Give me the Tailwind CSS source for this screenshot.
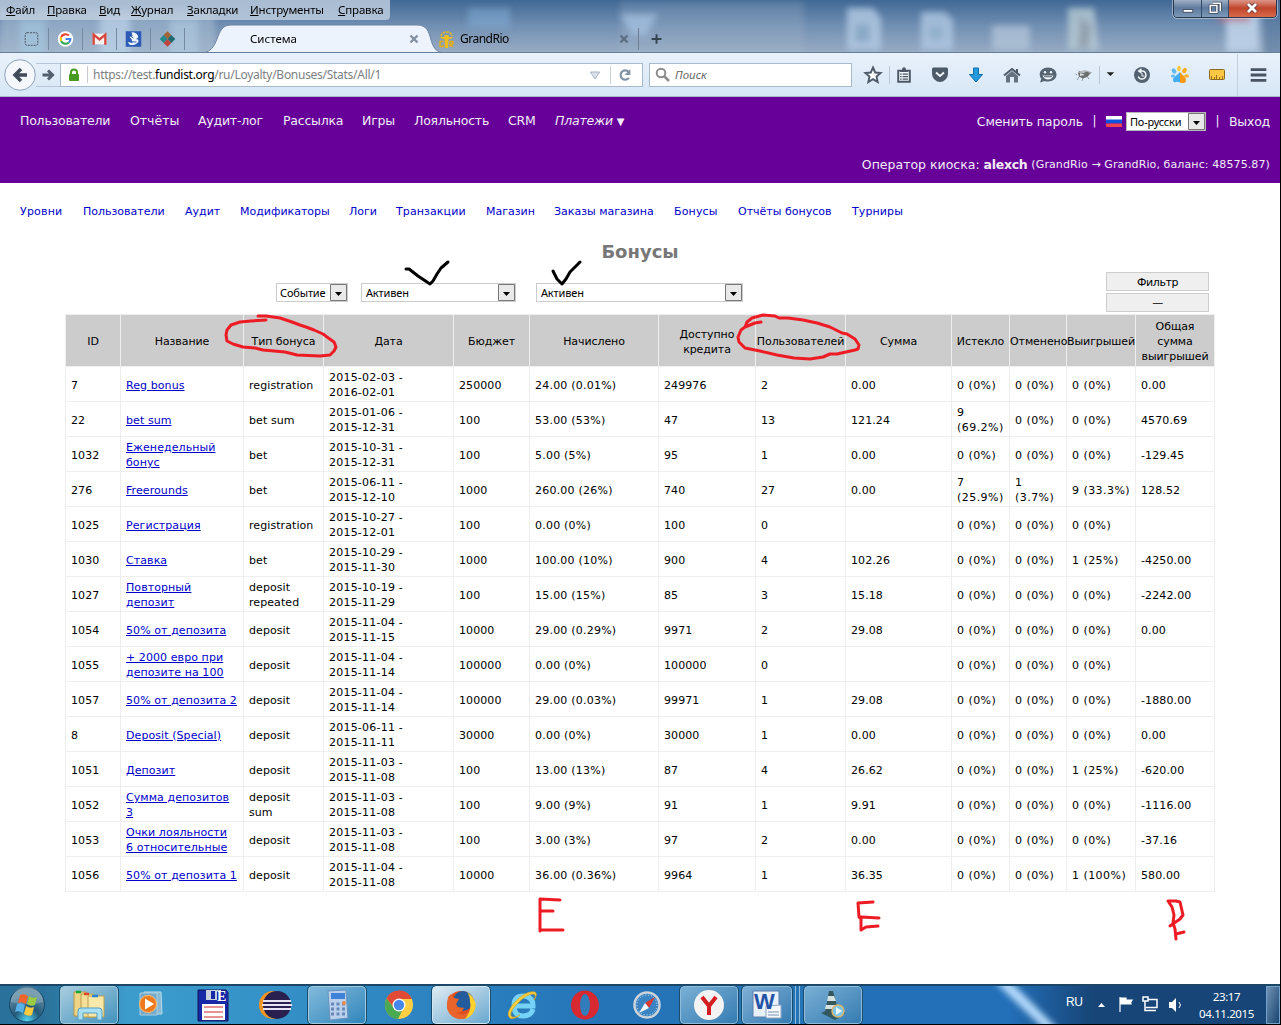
<!DOCTYPE html>
<html lang="ru">
<head>
<meta charset="utf-8">
<title>Система</title>
<script src="https://cdn.jsdelivr.net/npm/@tailwindcss/browser@4"></script>
</head>
<body class="relative flex h-[1025px] w-[1281px] flex-col overflow-hidden border-r border-b border-black bg-white font-['DejaVu_Sans',sans-serif] text-[11px] leading-[15px] text-black">

<!-- Window title bar, menu and tabs -->
<header class="relative h-[53px] shrink-0 overflow-hidden border-b border-[#63809f] bg-linear-to-b from-[#416995] via-[#7290b3] to-[#98abc3] font-['Noto_Sans',sans-serif] text-[12px] text-black">
  <svg class="absolute inset-0" width="1280" height="53">
    <defs><filter id="soft" x="-50%" y="-50%" width="200%" height="200%"><feGaussianBlur stdDeviation="3"/></filter></defs>
    <g filter="url(#soft)">
      <rect x="0" y="10" width="215" height="50" fill="#a9bdd2" opacity=".55"/>
      <rect x="100" y="16" width="30" height="40" fill="#c5dcf0" opacity=".6"/>
      <rect x="20" y="20" width="25" height="34" fill="#a8cfe9" opacity=".5"/>
      <rect x="170" y="20" width="28" height="34" fill="#b8d4ea" opacity=".5"/>
      <rect x="468" y="8" width="42" height="20" fill="#85b4dc" opacity=".45"/>
      <path d="M620 14h38l-12 22h-14z" fill="#a9c9ea" opacity=".7"/>
      <rect x="620" y="2" width="184" height="60" fill="#a4b6cc" opacity=".25"/>
      <path d="M847 8h26l8 10v32h-34z" fill="#b3cbe4" opacity=".8"/>
      <rect x="855" y="24" width="15" height="18" fill="#8ba9c8"/>
      <path d="M921 12h24l8 8v30h-32z" fill="#b3cbe4" opacity=".75"/>
      <circle cx="936" cy="33" r="8" fill="#93b1cc"/>
      <rect x="992" y="26" width="38" height="24" fill="#b3c6da" opacity=".75"/>
      <path d="M1068 8h26l5 42h-31z" fill="#b7cbd3" opacity=".8"/>
      <path d="M1080 16l12 10-4 22h-10z" fill="#94a2b0"/>
      <rect x="1226" y="14" width="33" height="38" fill="#bed1e8" opacity=".9"/>
      <rect x="1218" y="14" width="32" height="8" fill="#b86b7d" opacity=".7"/>
      <rect x="1264" y="0" width="20" height="60" fill="#4f7196" opacity=".5"/>
    </g>
  </svg>
  <nav class="relative flex h-5 w-[390px] items-center rounded-br bg-[#c3d1e1]/80 pb-[2px] pl-[6px] text-[11.5px] tracking-[-0.15px]">
    <span class="w-[41px]"><u>Ф</u>айл</span><span class="w-[52px]"><u>П</u>равка</span><span class="w-[32px]"><u>В</u>ид</span><span class="w-[56px]"><u>Ж</u>урнал</span><span class="w-[63px]"><u>З</u>акладки</span><span class="w-[88px]"><u>И</u>нструменты</span><span><u>С</u>правка</span>
  </nav>
  <svg class="absolute top-0 left-0" width="1280" height="53">
    <path d="M200 53C222 53 213 25 231 25H417C437 25 424 53 446 53Z" fill="#edf3fc" stroke="#6d86a2"/>
  </svg>
  <div class="relative flex h-8 items-center pt-[6px]">
    <div class="flex w-[215px] items-center pl-[15px]">
      <svg class="w-[34px] border-r border-[#75899f]" height="22" viewBox="0 0 34 22"><rect x="10.500" y="4.500" width="13" height="13" rx="2" fill="none" stroke="#49525e" stroke-dasharray="2 1"/></svg>
      <svg class="w-[34px] border-r border-[#75899f]" height="22" viewBox="0 0 34 22"><circle cx="17" cy="11" r="8" fill="#fff"/><g fill="none" stroke-width="2.200"><path d="M20.500 7.500A5 5 0 0 0 12.500 9" stroke="#ea4335"/><path d="M12.500 9a5 5 0 0 0 0 4" stroke="#fbbc05"/><path d="M12.500 13A5 5 0 0 0 20.500 14.500" stroke="#34a853"/><path d="M20.500 14.500Q22 13 22 11h-5" stroke="#4285f4"/></g></svg>
      <svg class="w-[34px] border-r border-[#75899f]" height="22" viewBox="0 0 34 22"><path d="M10 5.500h14v11H10z" fill="#f5f1f1"/><path d="M11 17V6.500l6 5 6-5V17" fill="none" stroke="#d7473d" stroke-width="2.400"/></svg>
      <svg class="w-[34px] border-r border-[#75899f]" height="22" viewBox="0 0 34 22"><path d="M9 3h16v16H9z" fill="#2c5bb5"/><path d="M15 4q6 0 7 5-1 2-3 2 4 0 3 3-3 4-9 3l-2-3 5 1-1-4-2-2 3-1z" fill="#eef5fc"/><path d="M14 8l3 2M15 14h5" stroke="#2b56ab"/></svg>
      <svg class="w-[34px] border-r border-[#75899f]" height="22" viewBox="0 0 34 22"><path d="M17 3l4 4-4 4-4-4z" fill="#a46536"/><path d="M13 7l4 4-4 4-4-4z" fill="#23888c"/><path d="M21 7l4 4-4 4-4-4z" fill="#1d6b70"/><path d="M17 11l4 4-4 4-4-4z" fill="#be4440"/></svg>
    </div>
    <div class="flex w-[220px] items-center pl-[35px] text-[11.5px]"><span class="w-[158px] pb-[2px]">Система</span><svg width="12" height="12" viewBox="0 0 12 12"><path d="M2.500 2.500l7 7m0-7l-7 7" stroke="#8390a3" stroke-width="2.400"/></svg></div>
    <div class="flex w-[204px] items-center pl-[4px]">
      <svg width="15" height="17" viewBox="0 0 15 17"><path d="M2 5q1-4 5.500-4T13 5" fill="none" stroke="#eab719" stroke-width="1.600" stroke-dasharray="2.500 1"/><path d="M0 6h5l1-2h3l1 2h5l-4 2H9.500l-.5 9H6l-.5-9H4z" fill="#f0bd1c"/><path d="M4.500 10.500H1v5h3v-2M11 16v-5.500h3V13h-3l3 3" fill="none" stroke="#e4ad13" stroke-width="1.300"/></svg>
      <span class="ml-[6px] w-[158px] pb-[2px] tracking-[-0.5px]">GrandRio</span><svg width="12" height="12" viewBox="0 0 12 12"><path d="M2.500 2.500l7 7m0-7l-7 7" stroke="#5d6e83" stroke-width="2.400"/></svg>
    </div>
    <svg class="ml-[-1px] border-l border-[#6e7f94]" width="38" height="22" viewBox="0 0 38 22"><path d="M18 6v10M13 11h10" stroke="#33444f" stroke-width="2"/></svg>
  </div>
  <div class="absolute top-[-2px] right-[3px] flex h-5 w-[104px] overflow-hidden rounded-b border border-[#26384d] outline outline-white/40">
    <svg class="w-7 border-r border-[#334c69] bg-linear-to-b from-[#a9b8ca] via-[#5e7a9c] to-[#7e9aba]" height="18" viewBox="0 0 28 18"><path d="M9.500 10.500h10v3h-10z" fill="#fff" stroke="#424d5e"/></svg>
    <svg class="w-[27px] border-r border-[#334c69] bg-linear-to-b from-[#a9b8ca] via-[#5e7a9c] to-[#7e9aba]" height="18" viewBox="0 0 27 18"><path d="M11 4h8v8M8.500 6.500h7v7h-7z" fill="none" stroke="#39475c" stroke-width="3"/><path d="M11 4h8v8M8.500 6.500h7v7h-7z" fill="none" stroke="#fff" stroke-width="1.500"/></svg>
    <svg class="flex-1 bg-linear-to-b from-[#dfa095] via-[#c0442b] to-[#d9694b]" height="18" viewBox="0 0 47 18"><path d="M19 5l8 8m0-8l-8 8" stroke="#65383a" stroke-width="4.500"/><path d="M19 5l8 8m0-8l-8 8" stroke="#fff" stroke-width="2.800"/></svg>
  </div>
</header>

<!-- Address toolbar -->
<div class="flex h-11 shrink-0 items-center border-b border-[#a8b9cc] bg-linear-to-b from-[#e9f1fb] to-[#d7e7f6] font-['Noto_Sans',sans-serif] text-[12px]">
  <svg class="ml-1" width="32" height="32" viewBox="0 0 32 32"><circle cx="16" cy="16" r="15.300" fill="#f4f8fd" stroke="#8fa2b8"/><path d="M23 16H11m6-6l-6 6 6 6" fill="none" stroke="#414b58" stroke-width="3.500"/></svg>
  <svg class="h-6 border-y border-[#b7c7d9]" width="24" height="24" viewBox="0 0 24 24"><path d="M6 12h11m-5-5l5 5-5 5" fill="none" stroke="#535f6d" stroke-width="3.200"/></svg>
  <div class="flex h-6 w-[583px] items-center border border-[#a8b9cb] bg-white">
    <svg width="26" height="20" viewBox="0 0 26 20"><rect x="8" y="9" width="10" height="7" rx="1" fill="#479b23"/><path d="M10 10V7.500q0-3 3-3t3 3V10" fill="none" stroke="#479b23" stroke-width="2"/></svg>
    <span class="flex h-[17px] w-[497px] items-center border-l border-[#c8cbd0] pl-[5px] text-[12px] tracking-[-0.28px] whitespace-pre text-[#7c7f83]">https://test.<span class="text-black">fundist.org</span>/ru/Loyalty/Bonuses/Stats/All/1</span>
    <svg width="26" height="18" viewBox="0 0 26 18"><path d="M6.500 6h9L11 13z" fill="#dce3ea" stroke="#a4b0bc"/></svg>
    <svg class="border-l border-[#c8cfd6]" width="31" height="18" viewBox="0 0 31 18"><path d="M18 5.500A4.800 4.800 0 1 0 18.500 12" fill="none" stroke="#8193a5" stroke-width="2.200"/><path d="M20 3v6h-6z" fill="#8193a5"/></svg>
  </div>
  <div class="ml-[6px] flex h-6 w-[203px] items-center border border-[#a8b9cb] bg-white">
    <svg width="25" height="20" viewBox="0 0 25 20"><circle cx="11" cy="8" r="4.300" fill="none" stroke="#8c8c8c" stroke-width="2"/><path d="M14 11l5 5" stroke="#8c8c8c" stroke-width="2.500"/></svg>
    <span class="text-[11.5px] text-[#686868] italic">Поиск</span>
  </div>
  <svg class="ml-[5px]" width="32" height="20" viewBox="0 0 32 20"><path d="M16 2.500l2.200 5 5.400.5-4.100 3.600 1.200 5.400-4.700-2.900-4.700 2.900 1.200-5.400L8.400 8l5.400-.5z" fill="#fff" stroke="#4d5967" stroke-width="1.900"/></svg>
  <svg class="border-l border-[#b8c7d6]" width="30" height="18" viewBox="0 0 30 18"><path d="M8.500 4.500h12v11.500h-12z" fill="#edf4fb" stroke="#4b5765" stroke-width="2"/><path d="M10.500 4h2q0-3 2-3t2 3h2v2h-8z" fill="#4b5765"/><path d="M10.500 8H12m1 0h5.500m-8 2.700H12m1 0h5.500m-8 2.600H12m1 0h5.500" stroke="#4b5765" stroke-width="1.300"/></svg>
  <svg class="ml-[3px]" width="36" height="20" viewBox="0 0 36 20"><path d="M10 4q0-1.500 1.500-1.500h13Q26 2.500 26 4v5q0 3-2.500 5.500T18 17q-3 0-5.500-2.500T10 9z" fill="#4d5a68"/><path d="M14 7.500l4 3.500 4-3.500" fill="none" stroke="#eef4fa" stroke-width="2"/></svg>
  <svg width="36" height="20" viewBox="0 0 36 20"><path d="M15.500 3h5v6.500h4L18 17l-6.500-7.500h4z" fill="#229bdd" stroke="#126ba6"/></svg>
  <svg width="36" height="20" viewBox="0 0 36 20"><path d="M10 10.500L18 4l8 6.500" fill="none" stroke="#4d5967" stroke-width="2"/><path d="M12 11l6-5 6 5v6.500h-4V12h-4v5.500h-4z" fill="#65717e"/><path d="M22 4h2v5l-2-1.500z" fill="#4d5967"/></svg>
  <svg width="36" height="20" viewBox="0 0 36 20"><path d="M18 2.500c5 0 8.500 3 8.500 7s-3.500 7-8.500 7q-2 0-3.500-.6L10 17.500l1.300-3.700Q9.700 12 9.700 9.500c0-4 3.500-7 8.300-7z" fill="#566371"/><circle cx="15" cy="7.300" r="1.200" fill="#eef4fa"/><circle cx="21" cy="7.300" r="1.200" fill="#eef4fa"/><path d="M12.500 10.500h11q-1.500 4-5.500 4t-5.500-4z" fill="#eef4fa"/><path d="M14 11.700h8" stroke="#566371"/></svg>
  <svg width="33" height="20" viewBox="0 0 33 20"><path d="M12 7l7-2 6 2-5 4-7 1z" fill="#b4b9bc"/><path d="M12 7.500l5 1 4-2 3.500 2-3.500 3.500-4 1.500-4-2z" fill="#6a6e6c"/><path d="M13 12l-2 3m6-2l-1 3m5-5l2 3m1-6l1.500-.5M11 10l-1.500-1m5-2l-2-1" stroke="#7c8481" stroke-width=".8"/><path d="M14 8l5 2-5 1z" fill="#d7dbd9"/></svg>
  <svg class="border-l border-[#b8c7d6]" width="19" height="18" viewBox="0 0 19 18"><path d="M7 6h8l-4 4z" fill="#222"/></svg>
  <svg class="ml-[6px]" width="36" height="20" viewBox="0 0 36 20"><circle cx="18" cy="10" r="8" fill="#536170"/><path d="M16.500 6H18a4 4 0 1 1-3.800 5.500" fill="none" stroke="#edf4f9" stroke-width="1.500"/><path d="M17.500 3v6L13.500 6z" fill="#edf4f9"/><path d="M18 8v3h2.500" fill="none" stroke="#edf4f9"/></svg>
  <svg class="ml-[2px]" width="36" height="20" viewBox="0 0 36 20"><path d="M18 7v10.500q-3-1.500-5.500 0-2.500-2-1-4.500z" fill="#41aef2"/><path d="M18 7v10.500q3 1 5 0 2-2 0-5z" fill="#f69814"/><ellipse cx="12" cy="6" rx="2" ry="2.800" transform="rotate(-35 12 6)" fill="#61b9f0"/><ellipse cx="17" cy="3.500" rx="1.800" ry="2.800" fill="#ffcb35"/><ellipse cx="22.500" cy="5.500" rx="2" ry="2.800" transform="rotate(35 22.500 5.500)" fill="#ffad19"/><ellipse cx="24.500" cy="11" rx="2.500" ry="1.800" fill="#ffb42b"/><ellipse cx="11" cy="11" rx="2" ry="1.500" fill="#61b9f0"/></svg>
  <svg class="ml-px" width="36" height="20" viewBox="0 0 36 20"><rect x="10.500" y="4.500" width="15" height="10" rx="1" fill="#fcc844" stroke="#8f681f"/><path d="M12.500 14v-3m3 3v-2m2 2v-4m3 4v-2m3 2v-3" stroke="#987227"/></svg>
  <svg class="ml-[2px] h-[42px] border-l border-[#c1d0df]" width="43" height="42" viewBox="0 0 43 42"><path d="M13 15.500h16M13 21h16m-16 5.500h16" stroke="#485462" stroke-width="3"/></svg>
</div>

<!-- Site header -->
<section class="h-[86px] shrink-0 bg-[#660099] text-[12.5px] text-[#f3ecf8]">
  <div class="flex h-[49px] items-center pl-5 tracking-[-0.22px]">
    <nav class="flex flex-1 pb-[2px] whitespace-nowrap"><a class="w-[110px]">Пользователи</a><a class="w-[68px] tracking-normal">Отчёты</a><a class="w-[85px]">Аудит-лог</a><a class="w-[79px]">Рассылка</a><a class="w-[52px]">Игры</a><a class="w-[94px]">Лояльность</a><a class="w-[47px]">CRM</a><a><i>Платежи</i> <span class="text-[10px]">▼</span></a></nav>
    <div class="flex items-center pr-[10px]">
      <a class="tracking-[-0.1px]">Сменить пароль</a><span class="w-[23px] text-center text-[12px]">|</span>
      <svg width="16" height="11" viewBox="0 0 16 11"><path d="M0 0h16v4H0z" fill="#fff"/><path d="M0 3.500h16v4H0z" fill="#0e52dd"/><path d="M0 7.500h16V11H0z" fill="#ef4352"/></svg>
      <span class="ml-1 flex h-[19px] w-20 items-center border border-[#b7b7b7] bg-white pl-[3px] font-['Noto_Sans',sans-serif] text-[11px] tracking-[-0.2px] text-black"><span class="w-[58px] whitespace-nowrap">По-русски</span><svg width="17" height="17" viewBox="0 0 17 17"><path d="M.5.500h16v16H.5z" fill="#e9e9e9" stroke="#777"/><path d="M5 8h7l-3.500 4z" fill="#000"/></svg></span>
      <span class="w-[23px] text-center text-[12px]">|</span><a>Выход</a>
    </div>
  </div>
  <div class="flex h-9 items-center justify-end pr-[10px] whitespace-pre"><span>Оператор киоска: <b class="tracking-[-0.3px]">alexch</b> </span><span class="pt-px text-[11px] tracking-[0.11px]">(GrandRio → GrandRio, баланс: 48575.87)</span></div>
</section>

<main class="relative h-[801px] shrink-0">
  <nav class="flex h-[56px] items-center pl-5 whitespace-nowrap text-[#0000cc]"><a class="w-[63px] tracking-[0.2px]">Уровни</a><a class="w-[102px]">Пользователи</a><a class="w-[55px]">Аудит</a><a class="w-[109px]">Модификаторы</a><a class="w-[47px]">Логи</a><a class="w-[90px] tracking-[0.1px]">Транзакции</a><a class="w-[68px]">Магазин</a><a class="w-[120px]">Заказы магазина</a><a class="w-[64px] tracking-[0.15px]">Бонусы</a><a class="w-[114px]">Отчёты бонусов</a><a class="tracking-[0.1px]">Турниры</a></nav>
  <h1 class="h-[33px] pt-px text-center text-[18px] leading-6 font-bold text-[#777]">Бонусы</h1>
  <div class="flex h-[42px] pl-[276px] font-['Noto_Sans',sans-serif] text-[11px] tracking-[-0.15px]">
    <div class="mt-[11px] flex h-[19px] w-[72px] items-center justify-between border border-[#ccc] pl-[3px]">Событие<svg width="17" height="17" viewBox="0 0 17 17"><path d="M.5.500h16v16H.5z" fill="#e9e9e9" stroke="#777"/><path d="M5 8h7l-3.500 4z" fill="#000"/></svg></div>
    <div class="mt-[11px] ml-[13px] flex h-[19px] w-[155px] items-center justify-between border border-[#ccc] pl-[4px]">Активен<svg width="17" height="17" viewBox="0 0 17 17"><path d="M.5.500h16v16H.5z" fill="#e9e9e9" stroke="#777"/><path d="M5 8h7l-3.500 4z" fill="#000"/></svg></div>
    <div class="mt-[11px] ml-5 flex h-[19px] w-[207px] items-center justify-between border border-[#ccc] pl-[4px]">Активен<svg width="17" height="17" viewBox="0 0 17 17"><path d="M.5.500h16v16H.5z" fill="#e9e9e9" stroke="#777"/><path d="M5 8h7l-3.500 4z" fill="#000"/></svg></div>
    <div class="ml-[363px] flex w-[103px] flex-col gap-[2px] font-['DejaVu_Sans',sans-serif] tracking-[-0.4px]"><button class="h-[19px] border border-[#ccc] bg-[#efefef] pt-px leading-none">Фильтр</button><button class="h-[19px] border border-[#ccc] bg-[#efefef] leading-none">—</button></div>
  </div>
  <table class="ml-[65px] w-[1150px] table-fixed border-separate border-spacing-0 border-t border-l border-[#eee]">
    <colgroup><col class="w-[55px]"><col class="w-[123px]"><col class="w-[80px]"><col class="w-[130px]"><col class="w-[76px]"><col class="w-[129px]"><col class="w-[97px]"><col class="w-[90px]"><col class="w-[106px]"><col class="w-[58px]"><col class="w-[57px]"><col class="w-[69px]"><col class="w-[79px]"></colgroup>
    <thead id="head"></thead>
    <tbody id="rows"></tbody>
  </table>
</main>

<!-- Marker annotations -->
<svg class="pointer-events-none absolute top-0 left-0" width="1280" height="984" fill="none" stroke-linecap="round" stroke-linejoin="round">
  <g stroke="#000" stroke-width="3"><path d="M406 269H409L418 276 430 284 433 281 437 274 441 268 448 262"/><path d="M553 271L557 279 562 284 566 279 570 272 580 262"/></g>
  <g stroke="#ed1c24" stroke-width="3"><path d="M258 316L266 316 280 318 292 322 300 325 306 327 314 330 323 334 327 337 334 342 336 347 334 351 330 355 320 356 297 355 285 352 263 350 255 348 243 347 233 344 227 341 226 335 227 330 231 325 240 322 251 321 266 320"/><path d="M761 322L755 323 745 327 747 322 752 318 763 315 775 316 779 318 788 318 803 320 817 323 830 327 842 333 847 334 855 339 859 345 858 349 855 350 837 354 830 354 823 357 810 359 794 358 777 355 760 351 745 348 739 342 738 337 741 330 745 327"/></g>
  <g stroke="#ed1c24" stroke-width="3"><path d="M560 900l-20-1v32M541 911h12m-13 19h23"/><path d="M873 902l-15 1 1 14 2 2v11l5-3 12-1M861 917l18 1"/><path d="M1168 901l4 6 2 8-1 8 2 6 1 10M1168 901h8l4 1 3 13-3 4-10 7M1176 934l8-2"/></g>
</svg>

<!-- Taskbar -->
<footer class="flex h-10 shrink-0 border-t-2 border-t-[#1d4666] bg-[#174879] font-['Noto_Sans',sans-serif] text-[12px] text-white">
  <div class="flex h-full w-[864px] items-center bg-linear-to-r from-[#2a729b] from-5% via-[#3c9dcd] via-15% to-[#2574b8] to-70%">
    <div class="flex w-[58px] pb-px pl-2"><svg width="38" height="37" viewBox="0 0 38 37"><defs><radialGradient id="orb" cx=".5" cy=".95" r=".75"><stop stop-color="#4fd3f0"/><stop offset=".5" stop-color="#235978"/><stop offset="1" stop-color="#5b87a1"/></radialGradient></defs><circle cx="19" cy="18.500" r="17.500" fill="url(#orb)" stroke="#174564"/><path d="M3 16a16 16 0 0 1 32 0q-16 5-32 0" fill="#fff" opacity=".2"/><path d="M12 9q4-2 8 1l-2 8q-4-3-8-1z" fill="#f2642c"/><path d="M21 10q4 3 8 1l-2 8q-4 2-8-1z" fill="#9bcb42"/><path d="M9 18q4-2 8 1l-2 8q-4-3-8-1z" fill="#57b2ea"/><path d="M18 20q4 3 8 1l-2 8q-4 2-8-1z" fill="#fecb3e"/></svg></div>
    <div class="flex w-[62px] justify-center"><div class="flex h-[38px] w-[58px] items-center justify-center rounded-sm border border-[#a0c9df] bg-linear-to-br from-[#a8cdde] to-[#3f93bd] outline outline-[#1a4d6d]"><svg width="34" height="32" viewBox="0 0 34 32"><path d="M2 3h12v24H2z" fill="#edd487" stroke="#b39746"/><path d="M9 5h13v23H9z" fill="#f3df98" stroke="#bd9e4d"/><path d="M16 7h16v21H16z" fill="#f8e9ab" stroke="#bd9e4d"/><path d="M4 3h5" stroke="#16a536" stroke-width="2.500"/><path d="M12 5h5" stroke="#e14528" stroke-width="2.500"/><path d="M20 7h6" stroke="#2684d2" stroke-width="2.500"/><path d="M6 31V22q0-3 3-3h18q3 0 3 3v9h-5v-7H11v7z" fill="#a9e0f4" stroke="#539fc2"/></svg></div></div>
    <div class="flex w-[62px] justify-center"><svg width="32" height="30" viewBox="0 0 32 30"><path d="M9 2h17l1 22H9z" fill="#8cbad3" stroke="#b8dcea"/><path d="M5 3h17v22H5z" fill="#76a9ca" stroke="#a9d0e1"/><circle cx="13" cy="14" r="8.500" fill="#ef7a1d" stroke="#ffc073"/><path d="M10 8.500l9 5.500-9 5.500z" fill="#fff"/></svg></div>
    <div class="flex w-[62px] justify-center"><svg width="34" height="34" viewBox="0 0 34 34"><path d="M2 2h28l2 2v29H2z" fill="#1829a8" stroke="#101453"/><path d="M10 2h15v10H10z" fill="#cad0de"/><path d="M15 3h4v8h-4z" fill="#1829a8"/><path d="M21 3h11v11H21z" fill="#1829a8"/><path d="M6 16h23v16H6z" fill="#fff"/><path d="M8 19h19M8 24h19M8 29h19" stroke="#ce2426"/><text x="21" y="13" fill="#fff" font-family="Liberation Serif" font-weight="bold" font-size="14">E</text></svg></div>
    <div class="flex w-[62px] justify-center"><svg width="34" height="30" viewBox="0 0 34 30"><circle cx="15" cy="15" r="14" fill="#f29522"/><circle cx="19" cy="15" r="14" fill="#29204f"/><path d="M5 11h28M4 15h30M5 19h28" stroke="#e7e5f5" stroke-width="2"/></svg></div>
    <div class="flex w-[62px] justify-center"><div class="flex h-[38px] w-[58px] items-center justify-center rounded-sm border border-[#a0c9df] bg-linear-to-br from-[#80badb] to-[#2f86bb] outline outline-[#1a4d6d]"><svg width="26" height="32" viewBox="0 0 26 32"><path d="M4 2l18-1 2 28-18 2z" fill="#b9d1ed" stroke="#6c91bf"/><path d="M7 4h14v6H7z" fill="#3e83d8"/><path d="M7 15h14m-14 5h14m-14 5h14" stroke="#6888b8" stroke-width="3" stroke-dasharray="3 2.500"/><circle cx="20" cy="14" r="2" fill="#ef8746"/></svg></div></div>
    <div class="flex w-[62px] justify-center"><svg width="30" height="30" viewBox="0 0 30 30"><circle cx="15" cy="15" r="14" fill="#ffce43"/><path d="M2.500 8.500A14 14 0 0 1 28 9H15a6 6 0 0 0-5 9z" fill="#e34a36"/><path d="M2.500 8.500L10 18q3 4 8 3l-4 8A14 14 0 0 1 2.500 8.500" fill="#4ba952"/><circle cx="15" cy="15" r="6.500" fill="#fff"/><circle cx="15" cy="15" r="5.200" fill="#4688ec"/></svg></div>
    <div class="flex w-[62px] justify-center"><div class="flex h-[38px] w-[58px] items-center justify-center rounded-sm border border-[#d1e6f3] bg-linear-to-br from-[#deebf2] to-[#68a8ce] outline outline-[#1a4d6d]"><svg width="32" height="32" viewBox="0 0 32 32"><circle cx="16" cy="16" r="14" fill="#e0501c"/><circle cx="18" cy="12" r="10" fill="#245b9d"/><path d="M3 8l3-3 3 4 5 1-3 5 2 3 6 1q-3 6-8 4 4 5 11 1 5-4 4-10 3 4 3 8-5 9-16 8Q2 26 2 17z" fill="#e8642a"/><path d="M22 3q11 8 8 17-3 8-10 10 7-9 5-17 0-6-3-10z" fill="#ffd12a"/></svg></div></div>
    <div class="flex w-[62px] justify-center"><svg width="34" height="32" viewBox="0 0 34 32"><path d="M27 20q-2 7-10 7-9 0-9-10t9-10q10 0 10 10H10" fill="none" stroke="#76d2f6" stroke-width="5"/><path d="M4 29Q-1 25 8 14 20 1 29 3q3 2-1 8 3-6-1-6-7 0-17 11-8 9-4 12 3 1 8-2-7 5-10 3" fill="#f7ce3e" stroke="#d9a823" stroke-width=".7"/></svg></div>
    <div class="flex w-[62px] justify-center"><svg width="30" height="32" viewBox="0 0 30 32"><ellipse cx="15" cy="16" rx="14" ry="14.500" fill="#d7292f"/><ellipse cx="15" cy="16" rx="5" ry="11" fill="#317cba"/></svg></div>
    <div class="flex w-[62px] justify-center"><svg width="30" height="32" viewBox="0 0 30 32"><circle cx="15" cy="16" r="12.500" fill="#3b84c4" stroke="#ccd3d9" stroke-width="2.500"/><circle cx="15" cy="16" r="10" fill="none" stroke="#cce7f4" stroke-dasharray="1 2"/><path d="M23 8l-6 11-4-5z" fill="#db3a31"/><path d="M7 24l6-10 4 5z" fill="#f4f7fa"/></svg></div>
    <div class="flex w-[62px] justify-center"><div class="flex h-[38px] w-[58px] items-center justify-center rounded-sm border border-[#8ebddb] bg-linear-to-br from-[#79afd4] to-[#347cb2] outline outline-[#1a4d6d]"><svg width="32" height="32" viewBox="0 0 32 32"><circle cx="16" cy="16" r="15" fill="#f4f3f3"/><path d="M9 8l7 9v9m0-9l7-9" fill="none" stroke="#d41d20" stroke-width="4"/></svg></div></div>
    <div class="flex w-[62px] pl-[2px]"><div class="flex h-[38px] w-[50px] items-center justify-center rounded-sm border border-[#8ebddb] bg-linear-to-br from-[#7fafd5] to-[#347cb2] outline outline-[#1a4d6d]"><svg width="30" height="30" viewBox="0 0 30 30"><path d="M1 1h26v26H1z" fill="#e8f1fa" stroke="#597eae"/><path d="M14 16l15-1v13H14z" fill="#f7f9fc" stroke="#91a7c5"/><path d="M16 22h11m-11 3h11" stroke="#7790b2"/><text x="2" y="19" font-family="Liberation Sans" font-weight="bold" font-size="22" textLength="23" fill="#2453a5">W</text></svg></div><div class="h-[38px] w-1 border-r border-[#8ebddb]"></div><div class="h-[38px] w-1 border-r border-[#8ebddb]"></div></div>
    <div class="flex w-[62px] justify-center"><div class="flex h-[38px] w-[58px] items-center justify-center rounded-sm border border-[#8ebddb] bg-linear-to-br from-[#79afd4] to-[#347cb2] outline outline-[#1a4d6d]"><svg width="30" height="32" viewBox="0 0 30 32"><path d="M3 24l11-5 14 5-11 7z" fill="#315a64"/><path d="M11 2h4l6 22q-6 4-14 0z" fill="#35565b"/><path d="M10 7h6l2 5H9zm-2 9h11l1 4H7z" fill="#d5e2df"/><circle cx="20" cy="22" r="6" fill="#7ec6e9" stroke="#dbb76d" stroke-width="1.500"/><path d="M18 18l6 4-6 4z" fill="#eefaff"/></svg></div></div>
  </div>
  <div class="relative flex flex-1 overflow-hidden bg-linear-to-r from-[#236fb8] from-35% to-[#174577] to-55%">
    <svg class="absolute inset-0" width="416" height="38"><path d="M130-5h16l50 50h-14Z" fill="#b2d8fa" filter="url(#soft)"/></svg>
    <div class="relative ml-[202px] w-8 pt-[9px] font-['Liberation_Sans',sans-serif] text-[12px] tracking-[-0.5px]">RU</div>
    <svg class="relative mt-[6px]" width="84" height="26" viewBox="0 0 84 26"><path d="M0 15h7l-3.500-4z" fill="#fff"/><path d="M22 5v15M22 6h6v6h-6m6-4h6q-2 2-1 4h-5z" fill="#fff" stroke="#fff" stroke-width="1.200"/><path d="M50 7.500h9v8H48m2 3h8m-11-9v9h3M45 5h5v4h-5z" fill="none" stroke="#fff" stroke-width="1.500"/><path d="M71 10h3l4-4v14l-4-4h-3z" fill="#fff"/><path d="M81 10q3 3 0 6" fill="none" stroke="#fff"/></svg>
    <div class="relative ml-[10px] w-[69px] pt-[2px] text-center text-[11.5px] leading-[17px] tracking-[-0.4px]">23:17<br>04.11.2015</div>
    <div class="absolute top-0 right-0 h-full w-[14px] border border-[#72a2c9] bg-linear-to-br from-[#7193b3] to-[#174571]"></div>
  </div>
</footer>

<script>
const headings = ['ID','Название','Тип бонуса','Дата','Бюджет','Начислено','Доступно<br>кредита','Пользователей','Сумма','Истекло','Отменено','Выигрышей','Общая<br>сумма<br>выигрышей'];
const z = '0 (0%)';
const data = [
 ['7','Reg bonus','registration','2015-02-03 -<br>2016-02-01','250000','24.00 (0.01%)','249976','2','0.00',z,z,z,'0.00'],
 ['22','bet sum','bet sum','2015-01-06 -<br>2015-12-31','100','53.00 (53%)','47','13','121.24','9<br>(69.2%)',z,z,'4570.69'],
 ['1032','Еженедельный<br>бонус','bet','2015-10-31 -<br>2015-12-31','100','5.00 (5%)','95','1','0.00',z,z,z,'-129.45'],
 ['276','Freerounds','bet','2015-06-11 -<br>2015-12-10','1000','260.00 (26%)','740','27','0.00','7<br>(25.9%)','1<br>(3.7%)','9 (33.3%)','128.52'],
 ['1025','Регистрация','registration','2015-10-27 -<br>2015-12-01','100','0.00 (0%)','100','0','',z,z,z,''],
 ['1030','Ставка','bet','2015-10-29 -<br>2015-11-30','1000','100.00 (10%)','900','4','102.26',z,z,'1 (25%)','-4250.00'],
 ['1027','Повторный<br>депозит','deposit<br>repeated','2015-10-19 -<br>2015-11-29','100','15.00 (15%)','85','3','15.18',z,z,z,'-2242.00'],
 ['1054','50% от депозита','deposit','2015-11-04 -<br>2015-11-15','10000','29.00 (0.29%)','9971','2','29.08',z,z,z,'0.00'],
 ['1055','+ 2000 евро при<br>депозите на 100','deposit','2015-11-04 -<br>2015-11-14','100000','0.00 (0%)','100000','0','',z,z,z,''],
 ['1057','50% от депозита 2','deposit','2015-11-04 -<br>2015-11-14','100000','29.00 (0.03%)','99971','1','29.08',z,z,z,'-1880.00'],
 ['8','Deposit (Special)','deposit','2015-06-11 -<br>2015-11-11','30000','0.00 (0%)','30000','1','0.00',z,z,z,'0.00'],
 ['1051','Депозит','deposit','2015-11-03 -<br>2015-11-08','100','13.00 (13%)','87','4','26.62',z,z,'1 (25%)','-620.00'],
 ['1052','Сумма депозитов<br>3','deposit<br>sum','2015-11-03 -<br>2015-11-08','100','9.00 (9%)','91','1','9.91',z,z,z,'-1116.00'],
 ['1053','Очки лояльности<br>6 относительные','deposit','2015-11-03 -<br>2015-11-08','100','3.00 (3%)','97','2','0.00',z,z,z,'-37.16'],
 ['1056','50% от депозита 1','deposit','2015-11-04 -<br>2015-11-08','10000','36.00 (0.36%)','9964','1','36.35',z,z,'1 (100%)','580.00']
];
const spacing = i => i >= 9 && i <= 11 ? 'tracking-[0.45px]' : i === 3 || i === 5 ? 'tracking-[0.22px]' : i === 12 ? 'tracking-[0.12px]' : 'tracking-[0.08px]';
document.getElementById('head').innerHTML = '<tr>' + headings.map(h => `<th class="h-[52px] border-r border-b border-[#eee] bg-[#ccc] px-0 pt-[2px] pb-0 text-center font-normal tracking-[-0.08px] whitespace-nowrap">${h}</th>`).join('') + '</tr>';
document.getElementById('rows').innerHTML = data.map(r => '<tr>' + r.map((c, i) => `<td class="h-[35px] border-r border-b border-[#eee] pt-[2px] pr-0 pb-0 pl-[5px] whitespace-nowrap ${spacing(i)}">${i === 1 ? `<a class="text-[#0000cc] underline">${c}</a>` : c}</td>`).join('') + '</tr>').join('');
</script>
</body>
</html>
